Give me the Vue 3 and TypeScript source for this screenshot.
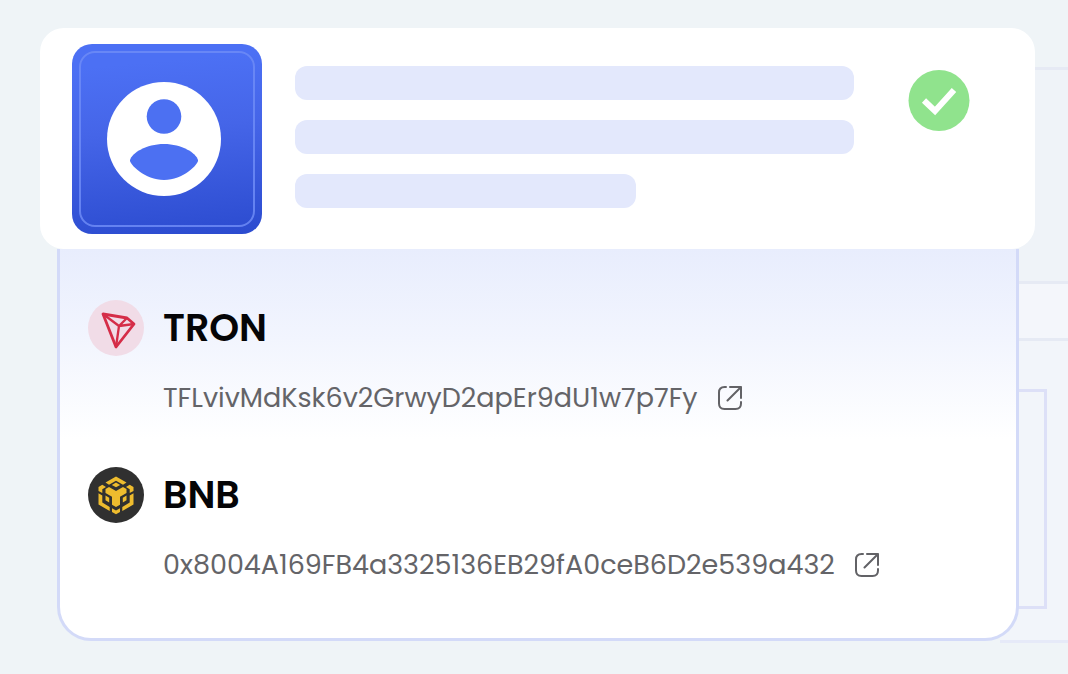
<script setup lang="ts">
interface Wallet {
  id: 'tron' | 'bnb'
  name: string
  address: string
}

const wallets: Wallet[] = [
  { id: 'tron', name: 'TRON', address: 'TFLvivMdKsk6v2GrwyD2apEr9dU1w7p7Fy' },
  { id: 'bnb', name: 'BNB', address: '0x8004A169FB4a3325136EB29fA0ceB6D2e539a432' },
]
</script>

<template>
  <main class="stage">
    <div class="backdrop" aria-hidden="true">
      <div class="band band-top"></div>
      <div class="band band-middle"></div>
      <div class="band band-bottom"><div class="frame"></div></div>
    </div>

    <div class="content">
      <section class="identity" aria-label="Profile">
        <div class="avatar">
          <svg viewBox="0 0 114 114" width="114" height="114" aria-hidden="true">
            <circle cx="57" cy="57" r="57" fill="#fff" />
            <circle cx="57" cy="34.500" r="17.300" fill="#4c70f2" />
            <path d="M23 78C25 71 39 62 57 62S89 71 91 78C92 82 76 98 57 98S22 82 23 78Z" fill="#4c70f2" />
          </svg>
        </div>
        <div class="bars">
          <div class="bar"></div>
          <div class="bar"></div>
          <div class="bar bar-short"></div>
        </div>
        <svg class="check" viewBox="0 0 62 62" width="62" height="62" role="img" aria-label="Verified">
          <circle cx="31" cy="31.500" r="30.500" fill="#90e38d" />
          <path d="M16 31.500L27 42L46 21" fill="none" stroke="#fff" stroke-width="6" />
        </svg>
      </section>

      <section class="panel" aria-label="Wallets">
        <article v-for="w in wallets" :key="w.id" class="wallet">
          <svg v-if="w.id === 'tron'" viewBox="0 0 56 56" width="56" height="56" aria-hidden="true">
            <circle cx="28" cy="28" r="28" fill="#f1dce7" />
            <g fill="none" stroke="#d52d48" stroke-width="2.800" stroke-linejoin="round">
              <path d="M15 14L39 18L46 24L28 47Z" />
              <path d="M15 14L31 26L46 24M39 18L31 26L28 47" stroke-width="2.300" />
            </g>
          </svg>
          <svg v-else viewBox="0 0 56 56" width="56" height="56" aria-hidden="true">
            <circle cx="28" cy="28" r="28" fill="#303030" />
            <g fill="#eebc2e">
              <path d="M28 9.500L38.500 15.500L35 17.700L28 13.700L21 17.700L17.500 15.500Z" />
              <path d="M28 15.500L32.200 18L28 20.300L23.800 18Z" />
              <path d="M10.500 20L14.300 17.700L18 20L14.300 22.300V26L10.500 24Z" />
              <path d="M45.500 20L41.700 17.700L38 20L41.700 22.300V26L45.500 24Z" />
              <path d="M17.500 22L21 19.900L28 24L35 19.900L38.500 22V26L32 29.800V37.700L28 40L24 37.700V29.800L17.500 26Z" />
              <path d="M10.500 26.300L14.300 28.500V35.500L21.700 39.900V44L10.500 37.600Z" />
              <path d="M45.500 26.300L41.700 28.500V35.500L34.300 39.900V44L45.500 37.600Z" />
              <path d="M17.500 28.600L21.200 30.800V35.400L17.500 33.200Z" />
              <path d="M38.500 28.600L34.800 30.800V35.400L38.500 33.200Z" />
              <path d="M24 41.300L28 43.500L32 41.300V45L28 47.300L24 45Z" />
            </g>
          </svg>
          <h2 class="name">{{ w.name }}</h2>
          <div class="address">
            <span>{{ w.address }}</span>
            <a class="open" :href="'#' + w.id" :aria-label="'Open ' + w.name + ' address'">
              <svg viewBox="0 0 24 24" width="24" height="24" aria-hidden="true">
                <path
                  d="M8 1H6.500Q1 1 1 6.500V17.500Q1 23 6.500 23H17.500Q23 23 23 17.500V16M12 1H23V12M23 1L9.500 14.500"
                  fill="none" stroke="#626266" stroke-width="2" stroke-linecap="round" stroke-linejoin="round"
                />
              </svg>
            </a>
          </div>
        </article>
      </section>
    </div>
  </main>
</template>

<style>
body {
  margin: 0;
  background: #eff4f7;
}
</style>

<style scoped>
.stage {
  position: relative;
  box-sizing: border-box;
  min-height: 100vh;
  padding: 28px 33px 34px 40px;
  overflow: hidden;
  background: #eff4f7;
  font-family: Poppins, Inter, "Liberation Sans", sans-serif;
}

.backdrop {
  position: absolute;
  top: 67px;
  right: 0;
  width: 68px;
}

.band {
  box-sizing: border-box;
  border-top: 3px solid #e6eaf4;
}

.band-top {
  height: 214px;
  background: #eff3f8;
}

.band-middle {
  height: 57px;
  background: #f4f6fb;
}

.band-bottom {
  height: 305px;
  padding: 48px 21px 0 0;
  border-bottom: 3px solid #e6eaf8;
  background: #f2f5fa;
}

.frame {
  box-sizing: border-box;
  height: 220px;
  border: 3px solid #dde0f7;
}

.content {
  position: relative;
}

.identity {
  position: relative;
  z-index: 1;
  display: flex;
  align-items: flex-start;
  padding: 16px 65px 15px 32px;
  border-radius: 24px;
  background: #fff;
}

.avatar {
  position: relative;
  box-sizing: border-box;
  display: flex;
  flex: none;
  align-items: center;
  width: 190px;
  height: 190px;
  padding-left: 35px;
  border-radius: 20px;
  background: linear-gradient(175deg, #4c70f4 12%, #4565e8 45%, #2b4bcf 100%);
}

.avatar::after {
  content: "";
  position: absolute;
  inset: 7px;
  border: 2px solid #6d8bf6;
  border-radius: 16px;
  opacity: 0.85;
}

.bars {
  display: flex;
  flex: 1;
  flex-direction: column;
  gap: 20px;
  margin: 22px 54px 0 33px;
}

.bar {
  height: 34px;
  border-radius: 12px;
  background: #e3e8fc;
}

.bar-short {
  width: 61%;
}

.check {
  flex: none;
  margin-top: 25px;
}

.panel {
  display: flex;
  flex-direction: column;
  gap: 49px;
  margin: 0 16px 0 17px;
  padding: 51px 28px 53px;
  border: 3px solid #d3daf8;
  border-top: 0;
  border-radius: 0 0 34px 34px;
  background: linear-gradient(#e8edfd 0, #f2f5fe 90px, #fff 190px);
}

.wallet {
  display: grid;
  grid-template-columns: 56px 1fr;
  gap: 22px 19px;
  align-items: center;
}

.name {
  margin: 0;
  color: #050507;
  font-size: 38px;
  font-weight: 600;
  line-height: 56px;
}

.address {
  display: flex;
  grid-column: 2;
  align-items: center;
  gap: 20px;
  color: #646468;
  font-size: 27px;
  font-weight: 400;
  line-height: 40px;
}

.open {
  display: flex;
}
</style>
